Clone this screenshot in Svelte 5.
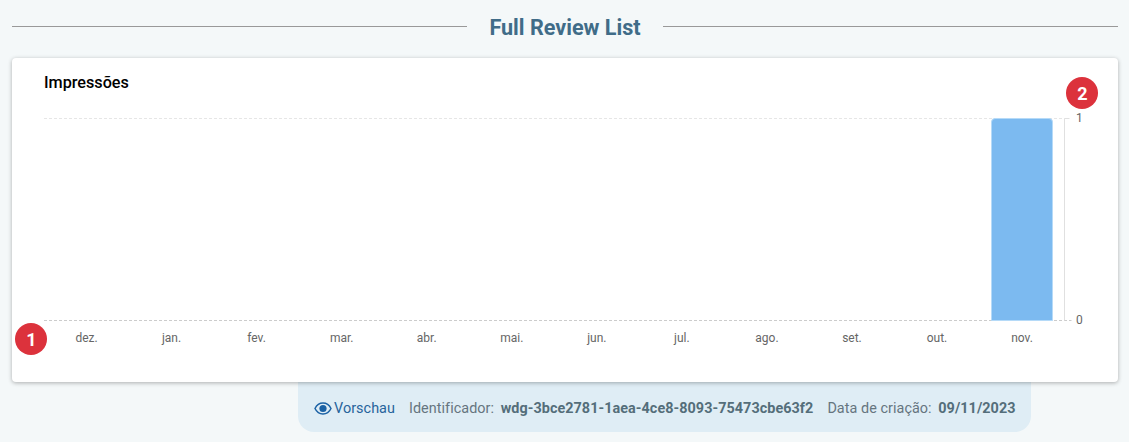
<script lang="ts">
    const months = ['dez.', 'jan.', 'fev.', 'mar.', 'abr.', 'mai.', 'jun.', 'jul.', 'ago.', 'set.', 'out.', 'nov.'];
    const values = [0, 0, 0, 0, 0, 0, 0, 0, 0, 0, 0, 1];

    const plotLeft = 32;
    const slot = 85.05;
    const top = 60.5;
    const bottom = 262.5;
    const axisX = 1052.5;
</script>

<div class="page">
    <div class="heading">
        <span class="rule"></span>
        <h2>Full Review List</h2>
        <span class="rule"></span>
    </div>

    <div class="card">
        <svg class="chart" width="1106" height="324" viewBox="0 0 1106 324">
            <text class="chart-title" x="32" y="30">Impressões</text>

            <line class="grid" x1={plotLeft} x2={axisX} y1={top} y2={top} />
            <line class="grid base" x1={plotLeft} x2={axisX + 7} y1={bottom} y2={bottom} />
            <polyline class="axis" points="{axisX + 5},{top} {axisX},{top} {axisX},{bottom}" />

            {#each months as month, i}
                {#if values[i] > 0}
                    <path class="bar" d="M979.5 {bottom} V64 a3.5 3.5 0 0 1 3.500 -3.500 H1037 a3.500 3.500 0 0 1 3.500 3.500 V{bottom} Z" />
                {/if}
                <text class="label" x={plotLeft + slot * (i + 0.5)} y="284" text-anchor="middle">{month}</text>
            {/each}

            <text class="label" x="1064" y="64">1</text>
            <text class="label" x="1064" y="266">0</text>
        </svg>

        <span class="badge badge-one">1</span>
        <span class="badge badge-two">2</span>
    </div>

    <div class="footer">
        <a class="preview" href="#preview">
            <svg width="18" height="13" viewBox="0 0 18 13">
                <path class="eye-line" d="M1 6.500C2.700 3 5.600 1 9 1s6.300 2 8 5.500C15.300 10 12.400 12 9 12s-6.300-2-8-5.500z" />
                <circle class="eye-pupil" cx="9" cy="6.500" r="3.600" />
            </svg>
            <span>Vorschau</span>
        </a>
        <span class="meta">Identificador: <b>wdg-3bce2781-1aea-4ce8-8093-75473cbe63f2</b></span>
        <span class="meta">Data de criação: <b>09/11/2023</b></span>
    </div>
</div>

<style>
    :global(body) {
        margin: 0;
        background-color: #f4f8f9;
        font-family: Roboto, sans-serif;
    }

    .page {
        padding: 0 11px 0 12px;
    }

    .heading {
        display: flex;
        align-items: center;
        gap: 22px;
        height: 53px;
    }

    .heading h2 {
        margin: 2px 0 0;
        font-size: 21.6px;
        font-weight: 700;
        color: #406c88;
        white-space: nowrap;
    }

    .rule {
        flex: 1;
        height: 1px;
        background-color: #999;
    }

    .card {
        position: relative;
        margin-top: 5px;
        height: 324px;
        background-color: #fff;
        border-radius: 4px;
        box-shadow: 0 1px 4px rgba(0, 0, 0, 0.3);
    }

    .chart {
        display: block;
    }

    .chart-title {
        font-size: 16.2px;
        font-weight: 500;
        fill: #000;
    }

    .grid {
        stroke: #e6e6e6;
        stroke-dasharray: 3 2;
    }

    .grid.base {
        stroke: #ccc;
    }

    .axis {
        fill: none;
        stroke: #e0e0e0;
    }

    .bar {
        fill: #7cbaf0;
        stroke: #b5daf8;
    }

    .label {
        font-size: 12px;
        fill: #666;
    }

    .badge {
        position: absolute;
        display: flex;
        align-items: center;
        justify-content: center;
        width: 32px;
        height: 32px;
        padding-left: 1px;
        box-sizing: border-box;
        border-radius: 50%;
        background-color: #dc323c;
        color: #fff;
        font-size: 18px;
        font-weight: 700;
    }

    .badge-one {
        left: 3px;
        top: 265px;
    }

    .badge-two {
        left: 1054px;
        top: 19px;
    }

    .footer {
        display: flex;
        align-items: center;
        gap: 14px;
        box-sizing: border-box;
        width: 733px;
        height: 50px;
        margin-left: 286px;
        padding: 2px 0 0 16px;
        background-color: #dfedf5;
        border-radius: 0 0 16px 16px;
        font-size: 14.4px;
        letter-spacing: 0.05px;
        color: #66757f;
        white-space: nowrap;
    }

    .preview {
        display: flex;
        align-items: center;
        gap: 2px;
        color: #27649c;
        text-decoration: none;
    }

    .eye-line {
        fill: none;
        stroke: #1b62a5;
        stroke-width: 1.5;
    }

    .eye-pupil {
        fill: #1b62a5;
    }

    .meta b {
        margin-left: 3px;
        font-weight: 700;
        color: #546e7a;
    }
</style>
